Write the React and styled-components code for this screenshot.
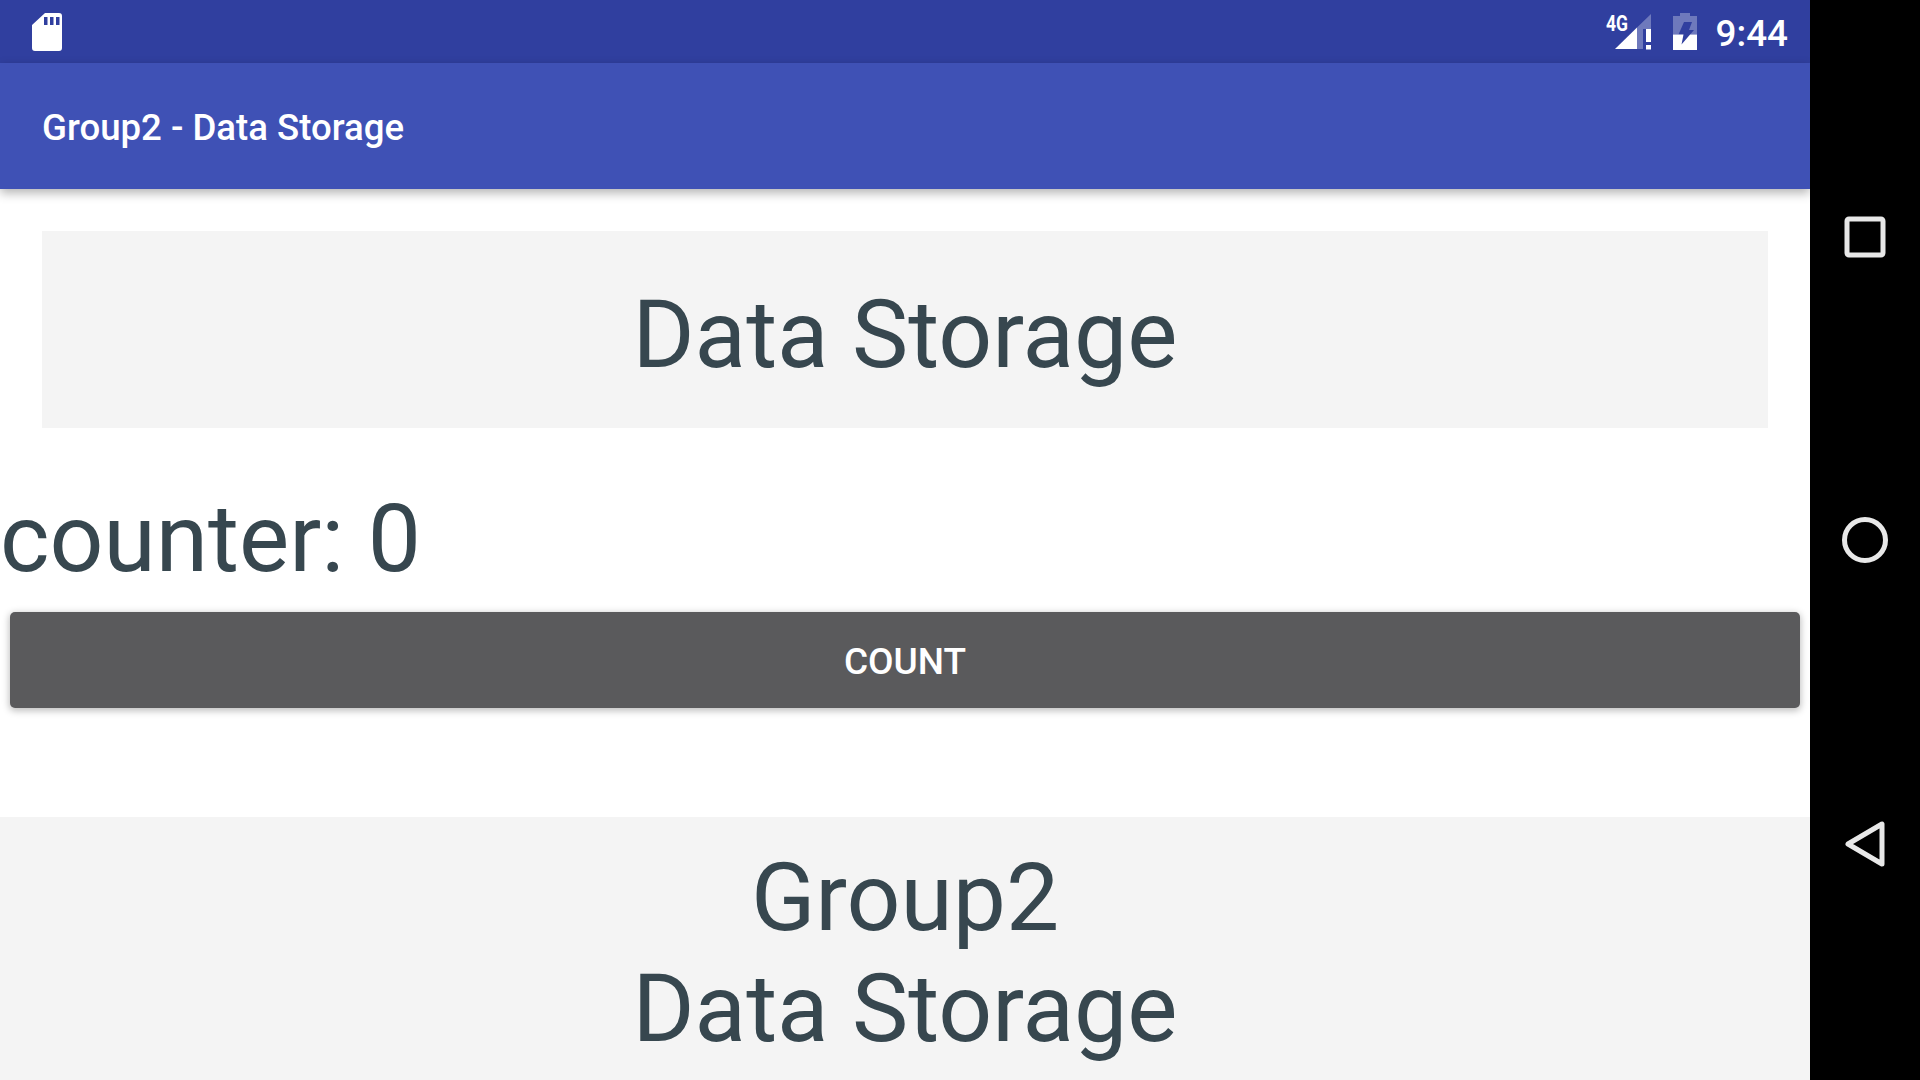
import React from "react"
import styled, { createGlobalStyle } from 'styled-components'

const GlobalStyle = createGlobalStyle`
  html, body {
    margin: 0;
    padding: 0;
    background: #000;
  }
  #root {
    height: 1080px;
  }
`

const SdIcon = () => (
  <svg width="30" height="38" viewBox="0 0 30 38">
    <path
      fill="#fff"
      fillRule="evenodd"
      d="M13 0H27a3 3 0 0 1 3 3V35a3 3 0 0 1-3 3H3a3 3 0 0 1-3-3V12ZM12 4V12H15.5V4ZM18 4V12H21.5V4ZM24 4V12H27.5V4Z"
    />
  </svg>
)

const SignalIcon = () => (
  <SignalSvg width="46" height="38" viewBox="0 0 46 38">
    <text x="0" y="17.5" fontFamily="Roboto, sans-serif" fontWeight="700" fontSize="22" textLength="22" lengthAdjust="spacingAndGlyphs" fill="#fff">4G</text>
    <path fill="#fff" fillOpacity="0.3" d="M31 36V14.6L45 1V16H37V36Z" />
    <path fill="#fff" d="M9 36L31 14.6V36Z" />
    <path fill="#fff" d="M40 16H45V29H40ZM40 32H45V36.5H40Z" />
  </SignalSvg>
)

const BatteryIcon = () => (
  <svg width="26" height="38" viewBox="0 0 26 38">
    <path fill="#fff" fillOpacity="0.3" d="M8 0H18V3H25V21.5H18.1L22 17H17L20 9H12L6.5 21.5H1V3H8Z" />
    <path fill="#fff" d="M1 21.5H11.5L9.5 31.5L18.1 21.5H25V37H1Z" />
  </svg>
)

const SquareIcon = () => (
  <svg width="42" height="42" viewBox="0 0 42 42">
    <rect x="3" y="3" width="36" height="36" rx="2" fill="none" stroke="#e8e8e8" strokeWidth="5" />
  </svg>
)

const CircleIcon = () => (
  <svg width="48" height="48" viewBox="0 0 48 48">
    <circle cx="24" cy="24" r="20.5" fill="none" stroke="#e8e8e8" strokeWidth="5" />
  </svg>
)

const BackIcon = () => (
  <svg width="42" height="48" viewBox="0 0 42 48">
    <path d="M38 5V45L4 25Z" fill="none" stroke="#e8e8e8" strokeWidth="5" strokeLinejoin="round" />
  </svg>
)

const App = () => (
  <Page>
    <GlobalStyle />
    <Screen>
      <StatusBar>
        <SdIcon />
        <StatusRight>
          <SignalIcon />
          <BatteryIcon />
          <Clock>9:44</Clock>
        </StatusRight>
      </StatusBar>
      <AppBar>Group2 - Data Storage</AppBar>
      <Content>
        <HeaderCard>
          <BigText>Data Storage</BigText>
        </HeaderCard>
        <Counter>counter: 0</Counter>
        <CountButton>Count</CountButton>
        <Footer>
          <BigText>Group2</BigText>
          <BigText>Data Storage</BigText>
        </Footer>
      </Content>
    </Screen>
    <NavBar>
      <NavButton><SquareIcon /></NavButton>
      <NavButton><CircleIcon /></NavButton>
      <NavButton><BackIcon /></NavButton>
    </NavBar>
  </Page>
)

export default App

const Page = styled.div`
  display: flex;
  width: 1920px;
  height: 1080px;
  overflow: hidden;
  font-family: Roboto, sans-serif;
`

const Screen = styled.div`
  display: flex;
  flex-direction: column;
  width: 1810px;
  background: #fff;
`

const StatusBar = styled.div`
  display: flex;
  align-items: center;
  justify-content: space-between;
  flex: none;
  height: 63px;
  padding: 0 22px 0 32px;
  box-sizing: border-box;
  background: #303f9f;
`

const StatusRight = styled.div`
  display: flex;
  align-items: center;
  gap: 22px;
`

const SignalSvg = styled.svg`
  margin-right: -2px;
  overflow: visible;
`

const Clock = styled.span`
  margin-left: -4px;
  padding-top: 4px;
  color: #fff;
  font-size: 36.8px;
  font-weight: 500;
`

const AppBar = styled.div`
  display: flex;
  align-items: center;
  flex: none;
  height: 126px;
  padding: 3px 0 0 42px;
  box-sizing: border-box;
  background: #3f51b5;
  box-shadow: 0 4px 10px rgba(0, 0, 0, 0.3);
  color: #fff;
  font-size: 36.6px;
  font-weight: 500;
  position: relative;
`

const Content = styled.div`
  display: flex;
  flex-direction: column;
  flex: 1;
  min-height: 0;
`

const HeaderCard = styled.div`
  display: flex;
  align-items: center;
  justify-content: center;
  height: 197px;
  margin: 42px 42px 0;
  padding-top: 10px;
  box-sizing: border-box;
  background: #f4f4f4;
`

const BigText = styled.div`
  color: #37474f;
  font-size: 94.7px;
  line-height: 111px;
  text-align: center;
`

const Counter = styled.div`
  height: 184px;
  color: #37474f;
  font-size: 94.7px;
  line-height: 222px;
`

const CountButton = styled.button`
  flex: none;
  height: 96px;
  margin: 0 10px;
  padding-top: 3px;
  border: none;
  border-radius: 5px;
  background: #5a5a5c;
  box-shadow: 0 2px 7px 1px rgba(0, 0, 0, 0.25);
  color: #fff;
  font-family: inherit;
  font-size: 37px;
  font-weight: 500;
  text-transform: uppercase;
`

const Footer = styled.div`
  flex: 1;
  margin-top: 109px;
  padding-top: 25px;
  background: #f4f4f4;
`

const NavBar = styled.div`
  display: flex;
  flex-direction: column;
  justify-content: center;
  width: 110px;
  background: #000;
`

const NavButton = styled.div`
  display: flex;
  align-items: center;
  justify-content: center;
  height: 303px;
`
